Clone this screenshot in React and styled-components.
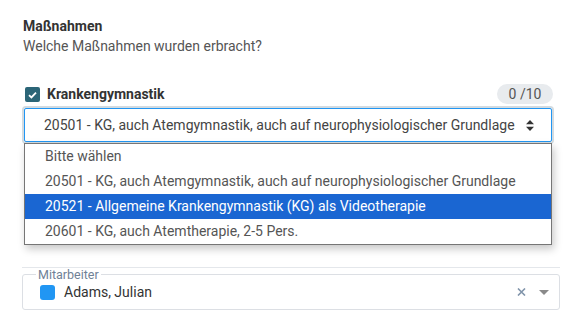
import React from "react";
import styled, { createGlobalStyle } from "styled-components";

const Global = createGlobalStyle`
  html, body { margin: 0; padding: 0; background: #fff; }
  body { font-family: Roboto, "Liberation Sans", sans-serif; font-size: 14px; color: #444; }
`;

const Page = styled.div`
  width: 583px;
  height: 332px;
  box-sizing: border-box;
  padding: 16px 23px 0 22px;
  overflow: hidden;
`;

const Section = styled.section`
  margin-right: 7px;
`;

const Title = styled.div`
  font-weight: 700;
  line-height: 20px;
  color: #333;
  padding-left: 1px;
`;

const Subtitle = styled.div`
  line-height: 20px;
  color: #555;
  padding-left: 1px;
`;

const Row = styled.div`
  display: flex;
  align-items: center;
  height: 20px;
  margin-top: 28px;
`;

const Check = styled.span`
  width: 15px;
  height: 15px;
  border-radius: 2px;
  background: #2b6577;
  margin: 1px 7px 0 3px;
  display: flex;
  align-items: center;
  justify-content: center;
`;

const Label = styled.span`
  font-weight: 700;
  color: #333;
  line-height: 20px;
  flex: 1;
`;

const Badge = styled.span`
  width: 56px;
  height: 20px;
  border-radius: 10px;
  background: #e8ebee;
  color: #555;
  line-height: 20px;
  text-align: center;
`;

const SelectBox = styled.div`
  margin: 4px 1px 0 2px;
  height: 34px;
  box-sizing: border-box;
  border: 1px solid #2196f3;
  border-radius: 2px;
  box-shadow: 0 0 0 2px #d3dbe0;
  display: flex;
  align-items: center;
  padding: 0 17px 0 19px;
  color: #444;
`;

const SelectText = styled.span`
  flex: 1;
  white-space: nowrap;
`;

const Menu = styled.ul`
  list-style: none;
  margin: 1px 1px 0 2px;
  padding: 0;
  border: 1px solid #767676;
  background: #fff;
  box-shadow: 2px 4px 8px rgba(0, 0, 0, 0.22);
`;

const Option = styled.li`
  height: 25px;
  line-height: 25px;
  padding-left: 20px;
  white-space: nowrap;
  color: ${(p) => (p.$active ? "#fff" : "#555")};
  background: ${(p) => (p.$active ? "#1a66d2" : "transparent")};
`;

const Rule = styled.hr`
  margin: 22px 0 0 0;
  border: 0;
  border-top: 1px solid #e4e7eb;
`;

const Field = styled.fieldset`
  margin: 0;
  padding: 0 10px 6px 16px;
  border: 1px solid #dcdfe4;
  border-radius: 3px;
  display: flex;
  align-items: center;
`;

const Legend = styled.legend`
  font-size: 12.5px;
  line-height: 13px;
  color: #6f8196;
  padding: 0 2px;
  margin-left: -3px;
`;

const FieldRow = styled.div`
  display: flex;
  align-items: center;
  width: 100%;
`;

const Swatch = styled.span`
  width: 15px;
  height: 15px;
  border-radius: 3px;
  background: #2196f3;
  margin-left: 1px;
  margin-right: 9px;
`;

const Name = styled.span`
  flex: 1;
  font-size: 14px;
  color: #333;
  line-height: 22px;
`;

const IconWrap = styled.span`
  display: flex;
  align-items: center;
  margin-left: ${(p) => p.$ml || 0}px;
`;

const options = [
  "Bitte wählen",
  "20501 - KG, auch Atemgymnastik, auch auf neurophysiologischer Grundlage",
  "20521 - Allgemeine Krankengymnastik (KG) als Videotherapie",
  "20601 - KG, auch Atemtherapie, 2-5 Pers.",
];

export default function App() {
  return (
    <Page>
      <Global />
      <Section>
        <Title>Maßnahmen</Title>
        <Subtitle>Welche Maßnahmen wurden erbracht?</Subtitle>
        <Row>
          <Check>
            <svg width="9" height="8" viewBox="0 0 9 8">
              <path d="M1 4.2 L3.4 6.4 L8 1.6" stroke="#fff" strokeWidth="1.8" fill="none" />
            </svg>
          </Check>
          <Label>Krankengymnastik</Label>
          <Badge>0 /10</Badge>
        </Row>
        <SelectBox>
          <SelectText>20501 - KG, auch Atemgymnastik, auch auf neurophysiologischer Grundlage</SelectText>
          <svg width="8" height="11" viewBox="0 0 8 11">
            <path d="M0 4.3 L4 0 L8 4.3 Z M0 6.7 L4 11 L8 6.7 Z" fill="#333" />
          </svg>
        </SelectBox>
        <Menu>
          {options.map((o, i) => (
            <Option key={o} $active={i === 2}>
              {o}
            </Option>
          ))}
        </Menu>
      </Section>
      <Rule />
      <Field>
        <Legend>Mitarbeiter</Legend>
        <FieldRow>
          <Swatch />
          <Name>Adams, Julian</Name>
          <IconWrap>
            <svg width="9" height="8" viewBox="0 0 9 8">
              <path d="M1 0.5 L8 7.5 M8 0.5 L1 7.5" stroke="#8094aa" strokeWidth="1.6" />
            </svg>
          </IconWrap>
          <IconWrap $ml={13}>
            <svg width="10" height="5" viewBox="0 0 10 5">
              <path d="M0 0 L10 0 L5 5 Z" fill="#8a8a8a" />
            </svg>
          </IconWrap>
        </FieldRow>
      </Field>
    </Page>
  );
}
